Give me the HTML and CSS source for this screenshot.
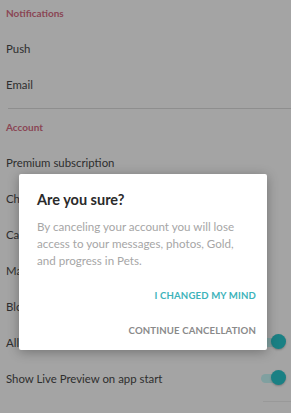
FILE: index.html
```html
<!DOCTYPE html>
<html>
<head>
<meta charset="utf-8">
<link rel="stylesheet" href="styles.css">
</head>
<body>
<div class="screen">
  <div class="list">
    <div class="section-title first">Notifications</div>
    <div class="row">Push</div>
    <div class="row">Email</div>
    <div class="section">
      <div class="section-title">Account</div>
      <div class="row">Premium subscription</div>
      <div class="row">Change password</div>
      <div class="row">Cancel account</div>
      <div class="row">Manage blocked users</div>
      <div class="row">Blocked users</div>
      <div class="row toggle-row"><span>Allow Live Preview</span><span class="toggle"><span class="track"></span><span class="thumb"></span></span></div>
      <div class="row toggle-row"><span>Show Live Preview on app start</span><span class="toggle"><span class="track"></span><span class="thumb"></span></span></div>
      <div class="end-line"></div>
    </div>
  </div>
  <div class="dialog">
    <div class="dialog-title">Are you sure?</div>
    <div class="dialog-body">By canceling your account you will lose access to your messages, photos, Gold, and progress in Pets.</div>
    <div class="dialog-actions">
      <div class="btn primary">I CHANGED MY MIND</div>
      <div class="btn secondary">CONTINUE CANCELLATION</div>
    </div>
  </div>
</div>
</body>
</html>
```
FILE: styles.css
```css
html, body {
  margin: 0;
  padding: 0;
}
body {
  background: #a4a4a4;
  font-family: "Lato", "Open Sans", sans-serif;
  overflow: hidden;
}
.screen {
  position: relative;
  width: 291px;
  height: 413px;
  overflow: hidden;
  background: #a4a4a4;
}
.list {
  display: flex;
  flex-direction: column;
}
.section-title {
  height: 36px;
  display: flex;
  align-items: center;
  padding-left: 6px;
  font-size: 10px;
  font-weight: 700;
  color: #8a4654;
}
.section-title.first {
  height: 26px;
  margin-bottom: 4px;
}
.row {
  height: 36px;
  display: flex;
  align-items: center;
  padding-left: 6px;
  font-size: 11.4px;
  color: #2e2e2e;
}
.section {
  margin-top: 6px;
  margin-left: 8px;
  border-top: 1px solid #8e8e8e;
}
.section .section-title,
.section .row {
  margin-left: -8px;
  height: 36px;
}
.section .section-title { height: 35px; }
.toggle-row {
  justify-content: space-between;
  padding-right: 5px;
}
.toggle {
  position: relative;
  width: 25px;
  height: 16px;
  display: flex;
  align-items: center;
}
.track {
  width: 22px;
  height: 9px;
  border-radius: 5px;
  background: #80a0a0;
}
.thumb {
  position: absolute;
  right: 0;
  top: 0;
  width: 15px;
  height: 15px;
  border-radius: 50%;
  background: #1a8084;
  box-shadow: 0 1px 2px rgba(0,0,0,0.25);
}
.end-line {
  margin-top: 5px;
  margin-left: 255px;
  height: 1px;
  background: #999;
}
.dialog {
  position: absolute;
  left: 19px;
  top: 174px;
  width: 248px;
  height: 176px;
  box-sizing: border-box;
  background: #ffffff;
  border-radius: 2px;
  box-shadow: 0 2px 12px rgba(0,0,0,0.3);
  padding: 17px 11px 0 18px;
  display: flex;
  flex-direction: column;
}
.dialog-title {
  font-size: 14.5px;
  font-weight: 700;
  color: #2b2b2b;
  line-height: 18px;
}
.dialog-body {
  margin-top: 9px;
  font-size: 11.6px;
  line-height: 17px;
  color: #a6a6a6;
  padding-right: 12px;
}
.dialog-actions {
  margin-top: 9px;
  display: flex;
  flex-direction: column;
  align-items: flex-end;
}
.btn {
  height: 35px;
  display: flex;
  align-items: center;
  font-size: 9.6px;
  letter-spacing: 0.15px;
}
.btn.primary {
  color: #3db3ba;
  font-weight: 700;
}
.btn.secondary {
  color: #8a8a8a;
  font-weight: 700;
}
```
